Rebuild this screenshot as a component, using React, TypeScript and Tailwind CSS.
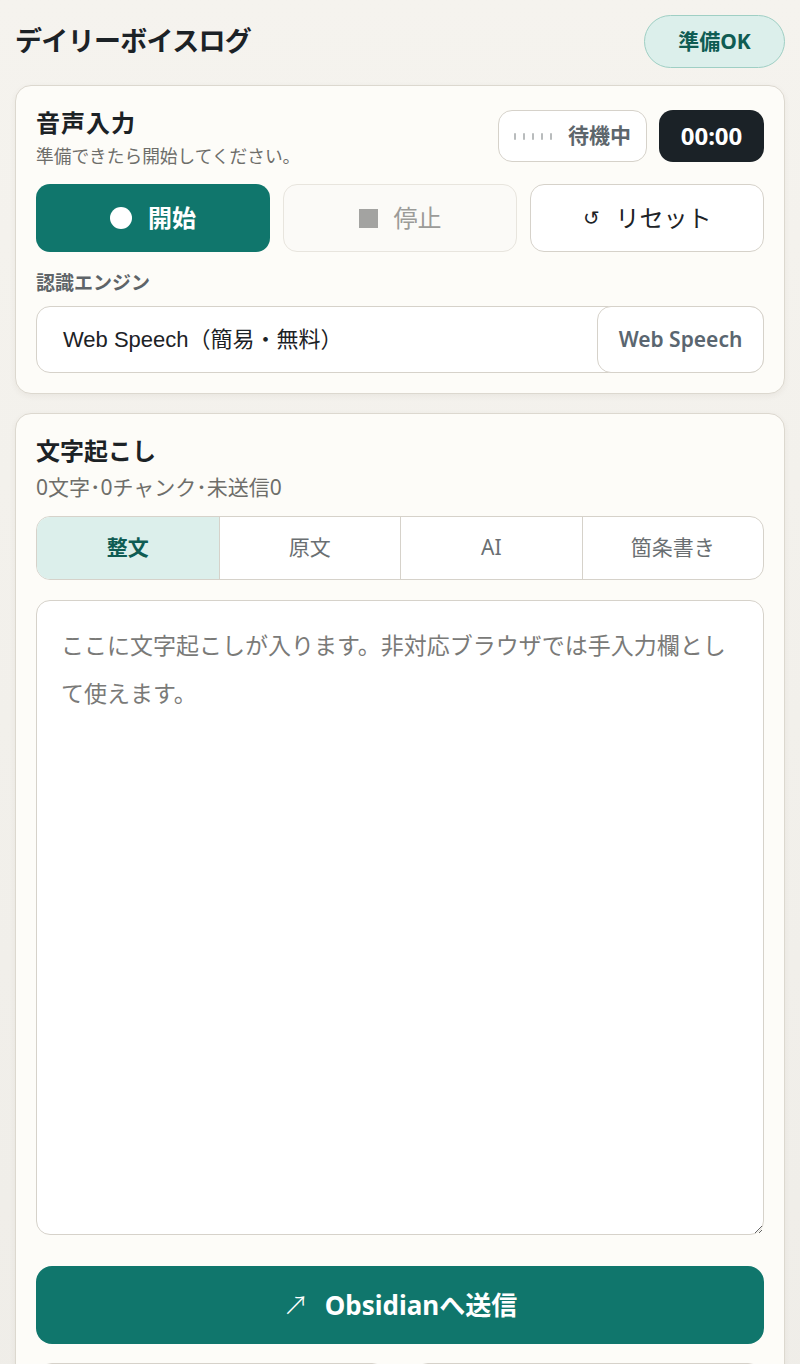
import React from 'react';

const jp = '"Noto Sans", "Noto Sans CJK JP", sans-serif';

function Card({ children, className = '' }: { children: React.ReactNode; className?: string }) {
  return (
    <section
      className={`rounded-[16px] border border-[#dcd8cf] bg-[#fdfcf8] px-5 shadow-[0_2px_6px_rgba(60,50,30,0.06)] ${className}`}
    >
      {children}
    </section>
  );
}

export default function App() {
  const tabs = ['整文', '原文', 'AI', '箇条書き'];
  return (
    <div
      className="min-h-[1364px] bg-gradient-to-b from-[#f5f3ee] to-[#efede8] px-[15px] pt-[15px] text-[#1c2226]"
      style={{ fontFamily: jp }}
    >
      <header className="mb-[17px] flex h-[53px] items-center justify-between">
        <h1 className="text-[27px] font-bold tracking-tight">デイリーボイスログ</h1>
        <span className="flex h-[53px] w-[141px] items-center justify-center rounded-full border border-[#9fcfc4] bg-[#dcefeb] text-[21px] font-bold text-[#0f5c53]">
          準備OK
        </span>
      </header>

      {/* 音声入力 */}
      <Card className="pb-5 pt-[22px]">
        <div className="flex items-start justify-between">
          <div>
            <h2 className="text-[24px] font-bold leading-[30px] tracking-[1px]">音声入力</h2>
            <p className="mt-[6px] text-[17.7px] leading-[24px] text-[#6e6e6a]">準備できたら開始してください。</p>
          </div>
          <div className="mt-[2px] flex gap-3">
            <div className="flex h-[52px] w-[149px] items-center justify-center gap-4 rounded-[14px] border border-[#d6d2ca] bg-white">
              <span className="flex items-center gap-[7px]">
                {[0, 1, 2, 3, 4].map((i) => (
                  <span key={i} className="h-[7px] w-[2px] rounded-full bg-[#b9bcbd]" />
                ))}
              </span>
              <span className="text-[21px] font-bold text-[#5d666c]">待機中</span>
            </div>
            <div className="flex h-[52px] w-[105px] items-center justify-center rounded-[14px] bg-[#1b2227] text-[24px] font-bold text-white">
              00:00
            </div>
          </div>
        </div>

        <div className="mt-[16px] grid grid-cols-3 gap-[13px]">
          <button className="flex h-[68px] items-center justify-center gap-4 rounded-[14px] bg-[#10766c] text-[24px] font-bold text-white">
            <span className="h-[22px] w-[22px] rounded-full bg-white" />
            開始
          </button>
          <button className="flex h-[68px] items-center justify-center gap-4 rounded-[14px] border border-[#e8e5de] bg-[#fbfaf7] text-[24px] text-[#9b9b98]">
            <span className="h-[19px] w-[19px] bg-[#a3a3a1]" />
            停止
          </button>
          <button className="flex h-[68px] items-center justify-center gap-4 rounded-[14px] border border-[#d6d2ca] bg-white text-[24px] text-[#1c2226]">
            <span className="text-[20px]">↺</span>
            リセット
          </button>
        </div>

        <p className="mt-[18px] text-[19px] font-semibold leading-[26px] text-[#5e6468]">認識エンジン</p>
        <div className="mt-[10px] flex h-[67px] items-stretch rounded-[14px] border border-[#d6d2ca] bg-white">
          <span
            className="flex flex-1 items-center pl-[26px] text-[22px] text-[#1c2226]"
            style={{ fontFamily: '"Liberation Sans", "Noto Sans CJK JP", sans-serif' }}
          >
            Web Speech（簡易・無料）
          </span>
          <span className="-m-px flex w-[167px] items-center justify-center rounded-[14px] border border-[#d6d2ca] bg-white text-[21px] font-semibold text-[#5a6670]">
            Web Speech
          </span>
        </div>
      </Card>

      {/* 文字起こし */}
      <Card className="mt-[19px] pb-5 pt-[22px]">
        <h2 className="text-[24px] font-bold leading-[30px]">文字起こし</h2>
        <p className="mt-[8px] text-[21px] leading-[26px] text-[#6e6e6a]">0文字･0チャンク･未送信0</p>

        <div className="mt-[16px] grid h-[64px] grid-cols-4 overflow-hidden rounded-[14px] border border-[#d6d2ca] bg-white">
          {tabs.map((t, i) => (
            <div
              key={t}
              className={`flex items-center justify-center text-[21px] ${
                i === 0 ? 'bg-[#dcefeb] font-bold text-[#0f5c53]' : 'border-l border-[#d6d2ca] text-[#6a6f72]'
              }`}
            >
              {t}
            </div>
          ))}
        </div>

        <textarea
          className="mt-[20px] block h-[635px] w-full rounded-[14px] border border-[#d6d2ca] bg-white px-[24px] py-[20px] text-[23px] leading-[48px] text-[#1c2226] outline-none placeholder:text-[#7a7a78]"
          placeholder="ここに文字起こしが入ります。非対応ブラウザでは手入力欄として使えます。"
          style={{ fontFamily: jp }}
        />

        <button className="mt-[31px] flex h-[78px] w-full items-center justify-center gap-4 rounded-[16px] bg-[#10766c] text-[26px] font-bold text-white">
          <span className="text-[26px] font-light">↗</span>
          Obsidianへ送信
        </button>

        <div className="mt-[19px] grid grid-cols-2 gap-[24px]">
          <button className="h-[68px] rounded-[16px] border border-[#d6d2ca] bg-[#f6f4ef]" />
          <button className="h-[68px] rounded-[16px] border border-[#d6d2ca] bg-[#f6f4ef]" />
        </div>
      </Card>
    </div>
  );
}
